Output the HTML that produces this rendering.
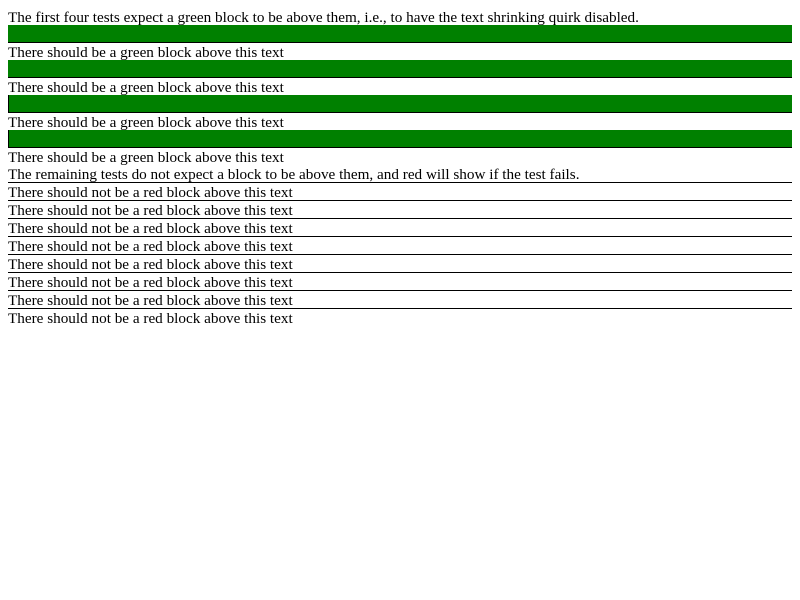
<!DOCTYPE html>
<html><head><style>
body{margin:8px;font-family:"Liberation Serif",serif;font-size:15.2px;line-height:17px;color:#000;background:#fff}
.t{height:17px;white-space:nowrap}
.g{height:17px;background:#008000;border-bottom:1px solid #000}
.gl{border-left:1px solid #000}
.r{border-top:1px solid #000;height:17px;white-space:nowrap}
span{position:relative;top:1px}
</style></head><body>
<div class="t"><span>The first four tests expect a green block to be above them, i.e., to have the text shrinking quirk disabled.</span></div>
<div class="g"></div><div class="t"><span>There should be a green block above this text</span></div>
<div class="g"></div><div class="t"><span>There should be a green block above this text</span></div>
<div class="g gl"></div><div class="t"><span>There should be a green block above this text</span></div>
<div class="g gl"></div><div class="t"><span>There should be a green block above this text</span></div>
<div class="t"><span>The remaining tests do not expect a block to be above them, and red will show if the test fails.</span></div>
<div class="r"><span>There should not be a red block above this text</span></div>
<div class="r"><span>There should not be a red block above this text</span></div>
<div class="r"><span>There should not be a red block above this text</span></div>
<div class="r"><span>There should not be a red block above this text</span></div>
<div class="r"><span>There should not be a red block above this text</span></div>
<div class="r"><span>There should not be a red block above this text</span></div>
<div class="r"><span>There should not be a red block above this text</span></div>
<div class="r"><span>There should not be a red block above this text</span></div>
</body></html>
